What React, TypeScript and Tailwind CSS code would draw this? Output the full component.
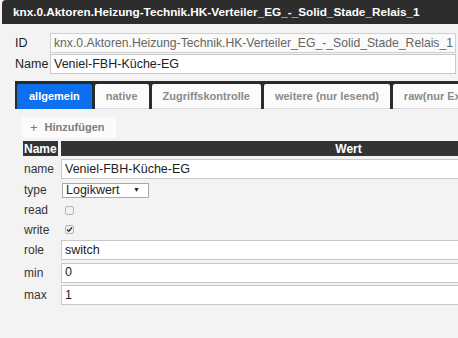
const TITLE = "knx.0.Aktoren.Heizung-Technik.HK-Verteiler_EG_-_Solid_Stade_Relais_1";

const tabs = ["allgemein", "native", "Zugriffskontrolle", "weitere (nur lesend)", "raw(nur Experte)"];

function Checkbox({ checked }: { checked?: boolean }) {
  return (
    <div className="ml-[4px] flex h-[9px] w-[9px] items-center justify-center rounded-[2px] border border-[#b5b5b5] bg-[#f1f1f1]">
      {checked && (
        <svg width="7" height="7" viewBox="0 0 7 7">
          <path d="M1 3.6 L2.8 5.3 L6 1.5" fill="none" stroke="#333" strokeWidth="1.4" />
        </svg>
      )}
    </div>
  );
}

function TextInput({ value }: { value: string }) {
  return (
    <div className="flex h-[20px] flex-1 items-center border border-[#c8c8c8] bg-white pl-[3px] text-[12.5px] text-[#222]">
      {value}
    </div>
  );
}

export default function App() {
  return (
    <div className="h-[338px] w-[458px] overflow-hidden bg-[#f3f3f3] font-['Liberation_Sans',Arial,sans-serif]">
      <div className="ml-[2px] flex h-[24px] items-center rounded-tl-[4px] bg-[#2d2d2d] pl-[11px] text-[11.75px] font-bold whitespace-nowrap text-white">
        {TITLE}
      </div>

      <div className="flex flex-col gap-[1px] pt-[9px] pr-[2px] pl-[15px]">
        <div className="flex items-center">
          <span className="w-[35px] shrink-0 text-[12.5px] text-[#222]">ID</span>
          <div className="flex h-[20px] min-w-0 flex-1 items-center overflow-hidden border border-[#d0d0d0] bg-[#fafafa] pl-[3px] text-[12.2px] whitespace-nowrap text-[#666]">
            {TITLE}
          </div>
        </div>
        <div className="flex items-center">
          <span className="w-[35px] shrink-0 text-[12.5px] text-[#222]">Name</span>
          <TextInput value="Veniel-FBH-Küche-EG" />
        </div>
      </div>

      <div className="mt-[7px] ml-[15px] flex w-[600px] gap-[3px] bg-[#2b2b2b] pt-[3px] pl-[2px]">
        {tabs.map((t, i) => (
          <div
            key={t}
            className={
              i === 0
                ? "flex h-[25px] shrink-0 items-center rounded-t-[2px] bg-[#0b6fee] px-[12px] text-[11px] font-bold whitespace-nowrap text-white"
                : "flex h-[25px] shrink-0 items-center rounded-t-[2px] border-b border-[#dcdcdc] bg-[#fbfbfb] px-[11px] text-[11px] font-bold whitespace-nowrap text-[#8a8a8a]"
            }
          >
            {t}
          </div>
        ))}
      </div>

      <div className="mt-[8px] ml-[22px] flex h-[21px] w-[94px] items-center gap-[7px] bg-[#fbfbfb] pl-[8px] text-[11px] font-bold text-[#7d7d7d]">
        <span className="text-[13px] font-normal">+</span>
        <span>Hinzufügen</span>
      </div>

      <div className="mt-[3px] ml-[23px] w-[613px]">
        <div className="flex h-[15px] gap-[3px] text-[12px] font-bold text-white">
          <div className="flex w-[35px] items-center bg-[#333] pl-[1px]">Name</div>
          <div className="flex flex-1 items-center justify-center bg-[#333]">Wert</div>
        </div>

        <div className="mt-[2px] flex flex-col text-[12px] text-[#333]">
          <div className="flex h-[22px] items-center">
            <span className="w-[38px] shrink-0 pl-[1px]">name</span>
            <TextInput value="Veniel-FBH-Küche-EG" />
          </div>
          <div className="flex h-[20px] items-center">
            <span className="w-[39px] shrink-0 pl-[1px]">type</span>
            <div className="flex h-[15px] w-[87px] items-center justify-between border border-[#a9a9a9] bg-white pr-[8px] pl-[3px] text-[12.5px] text-[#222]">
              <span>Logikwert</span>
              <span className="text-[7px]">▼</span>
            </div>
          </div>
          <div className="flex h-[20px] items-center">
            <span className="w-[38px] shrink-0 pl-[1px]">read</span>
            <Checkbox />
          </div>
          <div className="flex h-[19px] items-center">
            <span className="w-[38px] shrink-0 pl-[1px]">write</span>
            <Checkbox checked />
          </div>
          <div className="flex h-[22px] items-center">
            <span className="w-[38px] shrink-0 pl-[1px]">role</span>
            <TextInput value="switch" />
          </div>
          <div className="flex h-[23px] items-center">
            <span className="w-[38px] shrink-0 pl-[1px]">min</span>
            <TextInput value="0" />
          </div>
          <div className="flex h-[22px] items-center">
            <span className="w-[38px] shrink-0 pl-[1px]">max</span>
            <TextInput value="1" />
          </div>
        </div>
      </div>
    </div>
  );
}
